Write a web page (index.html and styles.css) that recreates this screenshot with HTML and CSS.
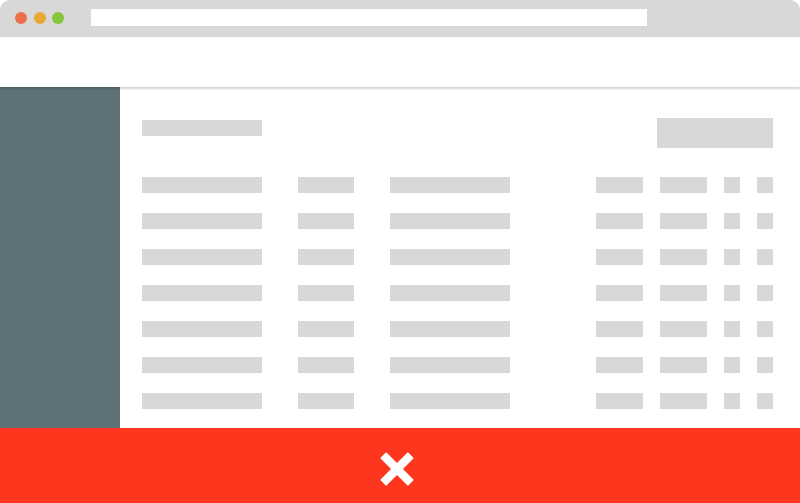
FILE: index.html
```html
<!DOCTYPE html>
<html lang="en">
<head>
<meta charset="utf-8">
<title>Browser wireframe</title>
<link rel="stylesheet" href="styles.css">
</head>
<body>
<div class="window">
  <div class="chrome">
    <i class="dot red"></i><i class="dot amber"></i><i class="dot green"></i>
    <div class="address"></div>
  </div>
  <header class="header"></header>
  <div class="body">
    <aside class="sidebar"></aside>
    <main class="main">
      <div class="toolbar"><div class="title"></div><div class="button"></div></div>
      <div class="table">
        <div class="row"><i></i><i></i><i></i><i></i><i></i><i></i><i></i></div>
        <div class="row"><i></i><i></i><i></i><i></i><i></i><i></i><i></i></div>
        <div class="row"><i></i><i></i><i></i><i></i><i></i><i></i><i></i></div>
        <div class="row"><i></i><i></i><i></i><i></i><i></i><i></i><i></i></div>
        <div class="row"><i></i><i></i><i></i><i></i><i></i><i></i><i></i></div>
        <div class="row"><i></i><i></i><i></i><i></i><i></i><i></i><i></i></div>
        <div class="row"><i></i><i></i><i></i><i></i><i></i><i></i><i></i></div>
      </div>
    </main>
  </div>
  <footer class="footer">
    <svg class="cross" viewBox="-20 -20 40 40" width="40" height="40" fill="#fff">
      <rect x="-19.6" y="-4.2" width="39.2" height="8.4" rx=".9" transform="rotate(45)"/>
      <rect x="-19.6" y="-4.2" width="39.2" height="8.4" rx=".9" transform="rotate(-45)"/>
    </svg>
  </footer>
</div>
</body>
</html>
```
FILE: styles.css
```css
* { box-sizing: border-box; }
body { margin: 0; background: #fff; }
.window {
  display: flex;
  flex-direction: column;
  width: 800px;
  height: 503px;
  overflow: hidden;
}
.chrome {
  display: flex;
  align-items: center;
  gap: 6.4px;
  height: 37px;
  padding: 0 0 1px 15px;
  background: #d8d8d8;
  border-radius: 10px 10px 0 0;
}
.dot { width: 12.2px; height: 12.2px; border-radius: 50%; }
.red { background: #eb6f4b; }
.amber { background: #e7a935; }
.green { background: #85c63c; }
.address {
  width: 556px;
  height: 17px;
  margin: 0 0 1px 20.2px;
  background: #fff;
}
.header {
  position: relative;
  z-index: 1;
  height: 50px;
  background: #fff;
  box-shadow: 0 2px 2px rgba(0, 0, 0, .17);
}
.body { display: flex; height: 341px; }
.sidebar { width: 120px; background: #5e7278; }
.main { flex: 1; padding: 31px 27px 0 22px; }
.toolbar { display: flex; justify-content: space-between; height: 30px; }
.title { width: 120px; height: 16px; margin-top: 2px; background: #d8d8d8; }
.button { width: 116px; height: 30px; background: #d8d8d8; }
.table { display: grid; gap: 20px; margin-top: 29px; }
.row {
  display: grid;
  grid-template-columns: 156px 92px 206px 64px 64px 33px 16px;
  height: 16px;
}
.row i { background: #d8d8d8; }
.row i:nth-child(1), .row i:nth-child(3) { width: 120px; }
.row i:nth-child(2) { width: 56px; }
.row i:nth-child(4), .row i:nth-child(5) { width: 47px; }
.row i:nth-child(6), .row i:nth-child(7) { width: 16px; }
.footer { height: 75px; padding: 21px 0 0 377px; background: #fd361d; }
.cross { display: block; }
```
